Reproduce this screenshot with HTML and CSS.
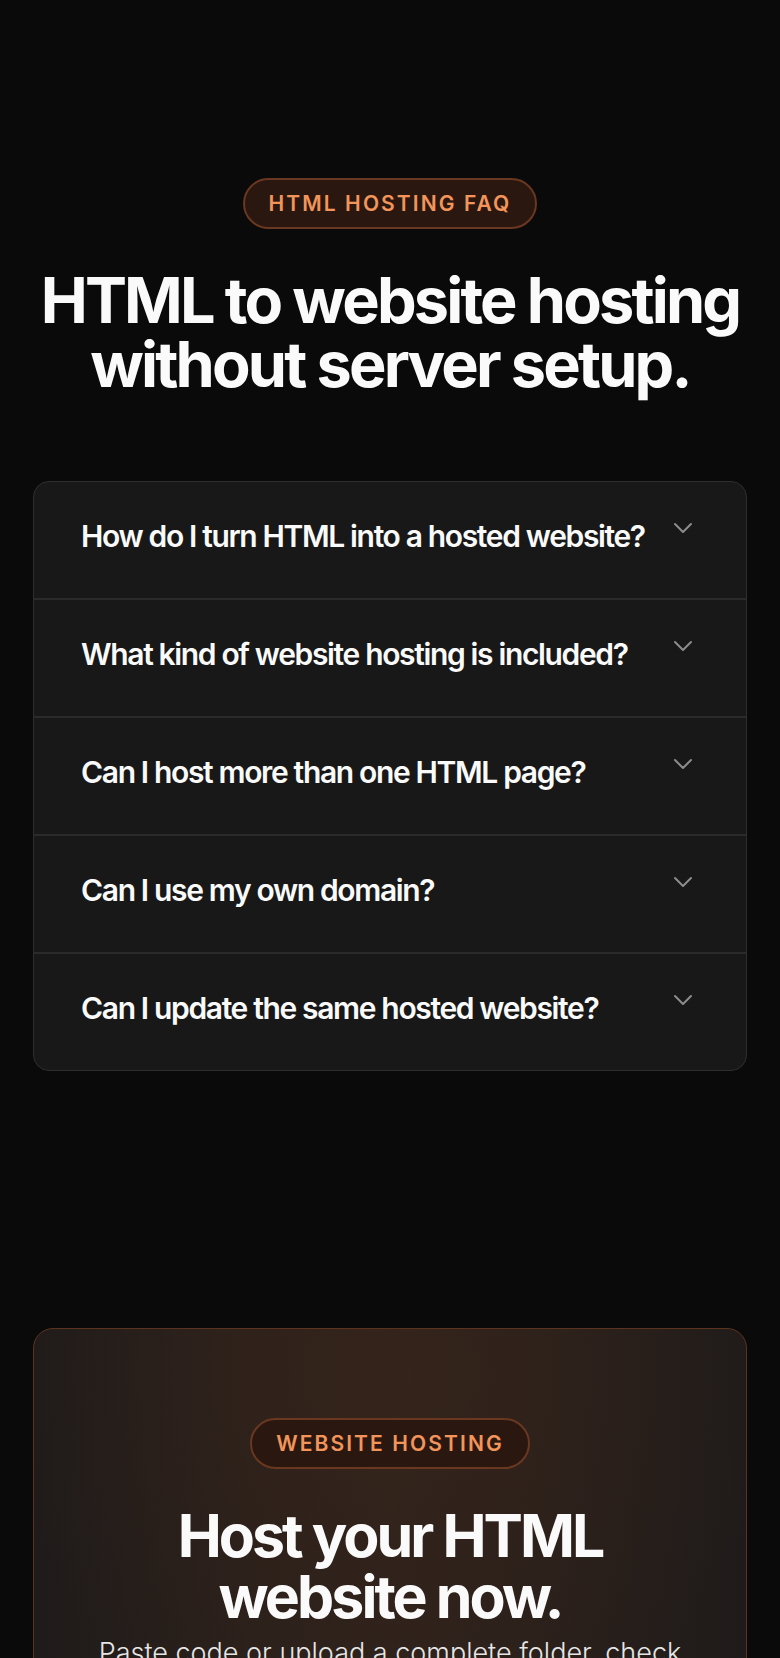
FILE: index.html
```html
<!DOCTYPE html>
<html lang="en">
<head>
<meta charset="utf-8">
<title>HTML Hosting FAQ</title>
<link rel="stylesheet" href="styles.css">
</head>
<body>
<main class="page">
  <section class="faq">
    <span class="pill">HTML HOSTING FAQ</span>
    <h1 class="title">HTML to website hosting<br>without server setup.</h1>
    <div class="faq-card">
      <div class="faq-row">
        <span class="q">How do I turn HTML into a hosted website?</span>
        <svg class="chev" viewBox="0 0 20 12" width="20" height="12"><path d="M2 2 L10 10 L18 2" fill="none" stroke="currentColor" stroke-width="2" stroke-linecap="round" stroke-linejoin="round"/></svg>
      </div>
      <div class="faq-row">
        <span class="q">What kind of website hosting is included?</span>
        <svg class="chev" viewBox="0 0 20 12" width="20" height="12"><path d="M2 2 L10 10 L18 2" fill="none" stroke="currentColor" stroke-width="2" stroke-linecap="round" stroke-linejoin="round"/></svg>
      </div>
      <div class="faq-row">
        <span class="q">Can I host more than one HTML page?</span>
        <svg class="chev" viewBox="0 0 20 12" width="20" height="12"><path d="M2 2 L10 10 L18 2" fill="none" stroke="currentColor" stroke-width="2" stroke-linecap="round" stroke-linejoin="round"/></svg>
      </div>
      <div class="faq-row">
        <span class="q">Can I use my own domain?</span>
        <svg class="chev" viewBox="0 0 20 12" width="20" height="12"><path d="M2 2 L10 10 L18 2" fill="none" stroke="currentColor" stroke-width="2" stroke-linecap="round" stroke-linejoin="round"/></svg>
      </div>
      <div class="faq-row">
        <span class="q">Can I update the same hosted website?</span>
        <svg class="chev" viewBox="0 0 20 12" width="20" height="12"><path d="M2 2 L10 10 L18 2" fill="none" stroke="currentColor" stroke-width="2" stroke-linecap="round" stroke-linejoin="round"/></svg>
      </div>
    </div>
  </section>

  <section class="cta">
    <span class="pill">WEBSITE HOSTING</span>
    <h2 class="cta-title">Host your HTML<br>website now.</h2>
    <p class="cta-text">Paste code or upload a complete folder, check everything in a preview, then publish it live.</p>
  </section>
</main>
</body>
</html>
```

FILE: styles.css
```css
* { box-sizing: border-box; }
html, body {
  margin: 0;
  padding: 0;
  background: #0a0a0a;
  color: #fafafa;
  font-family: Inter, "Noto Sans", "Liberation Sans", sans-serif;
}
.page {
  display: flex;
  flex-direction: column;
  padding: 0 33px;
}
.faq {
  display: flex;
  flex-direction: column;
  align-items: center;
  padding-top: 178px;
}
.pill {
  display: inline-flex;
  align-items: center;
  justify-content: center;
  height: 51px;
  padding: 0 24px;
  border: 2px solid #6a3720;
  border-radius: 999px;
  background: #2a1810;
  color: #f3955a;
  font-size: 21px;
  font-weight: 600;
  letter-spacing: 0.1em;
}
.title {
  margin: 39px 0 0;
  font-size: 63px;
  line-height: 64px;
  font-weight: 700;
  letter-spacing: -0.045em;
  text-align: center;
  color: #fafafa;
}
.faq-card {
  align-self: stretch;
  margin-top: 85px;
  border: 1px solid #2e2e2e;
  border-radius: 16px;
  background: #181818;
  overflow: hidden;
}
.faq-row {
  display: flex;
  align-items: flex-start;
  justify-content: space-between;
  gap: 24px;
  padding: 36px 53px 44px 47px;
  border-top: 2px solid #2a2a2a;
}
.faq-row:first-child { border-top: none; }
.q {
  font-size: 30px;
  line-height: 36px;
  font-weight: 600;
  letter-spacing: -0.045em;
  color: #fafafa;
}
.chev {
  flex: none;
  margin-top: 4px;
  color: #8c8c8c;
}
.cta {
  display: flex;
  flex-direction: column;
  align-items: center;
  margin-top: 257px;
  padding: 89px 30px 60px;
  border: 1.5px solid #5c331f;
  border-radius: 20px;
  background:
    radial-gradient(ellipse 55% 90% at 50% 10%, rgba(58, 37, 26, 0.5), rgba(40, 28, 22, 0) 100%),
    linear-gradient(90deg, #1f1b1a 0%, #2a201b 30%, #2e221c 50%, #2a201b 70%, #1f1b1a 100%);
}
.cta .pill {
  padding: 0 24px;
}
.cta-title {
  margin: 36px 0 0;
  font-size: 59px;
  line-height: 61px;
  font-weight: 700;
  letter-spacing: -0.05em;
  text-align: center;
  color: #fafafa;
}
.cta-text {
  margin: 8px 0 0;
  font-size: 27px;
  line-height: 36px;
  font-weight: 300;
  text-align: center;
  color: #e6e6e6;
}
```
